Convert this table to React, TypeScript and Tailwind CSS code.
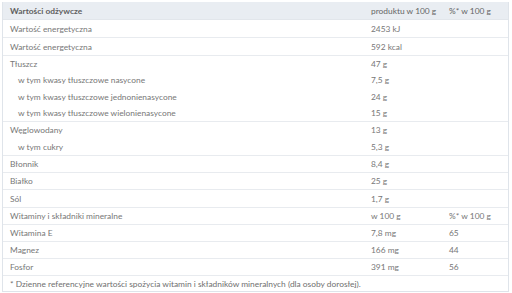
import React from 'react';

type Row = { label: string; value: string; pct?: string; sub?: boolean };

// heights exclude the 1px bottom border of each group
const groups: { rows: Row[]; h: string }[] = [
    { rows: [{ label: 'Wartość energetyczna', value: '2453 kJ' }], h: 'h-[17px]' },
    { rows: [{ label: 'Wartość energetyczna', value: '592 kcal' }], h: 'h-[17px]' },
    {
        rows: [
            { label: 'Tłuszcz', value: '47 g' },
            { label: 'w tym kwasy tłuszczowe nasycone', value: '7,5 g', sub: true },
            { label: 'w tym kwasy tłuszczowe jednonienasycone', value: '24 g', sub: true },
            { label: 'w tym kwasy tłuszczowe wielonienasycone', value: '15 g', sub: true },
        ],
        h: 'h-[16.25px]',
    },
    {
        rows: [
            { label: 'Węglowodany', value: '13 g' },
            { label: 'w tym cukry', value: '5,3 g', sub: true },
        ],
        h: 'h-[16.5px]',
    },
    { rows: [{ label: 'Błonnik', value: '8,4 g' }], h: 'h-[16px]' },
    { rows: [{ label: 'Białko', value: '25 g' }], h: 'h-[16px]' },
    { rows: [{ label: 'Sól', value: '1,7 g' }], h: 'h-[17px]' },
    { rows: [{ label: 'Witaminy i składniki mineralne', value: 'w 100 g', pct: '%* w 100 g' }], h: 'h-[16px]' },
    { rows: [{ label: 'Witamina E', value: '7,8 mg', pct: '65' }], h: 'h-[16px]' },
    { rows: [{ label: 'Magnez', value: '166 mg', pct: '44' }], h: 'h-[16px]' },
    { rows: [{ label: 'Fosfor', value: '391 mg', pct: '56' }], h: 'h-[16px]' },
];

export default function App() {
    return (
        <div className="w-[512px] h-[293px] bg-white pt-[2px] pl-[2px] font-['Lato','Liberation_Sans',sans-serif] text-[8.4px] leading-[12px] text-[#777]">
            <div className="w-[507px] border border-[#dfe4ea] border-t-0">
                <div className="grid grid-cols-[361px_78px_1fr] h-[18px] items-center bg-[#e9edf2] font-bold text-[#5f5f5f] border-b border-[#e2e6eb]">
                    <div className="pl-[7px]">Wartości odżywcze</div>
                    <div className="pl-[7px] font-normal text-[#666]">produktu w 100 g</div>
                    <div className="pl-[7px] font-normal text-[#666]">%* w 100 g</div>
                </div>
                {groups.map((g, i) => (
                    <div key={i} className="border-b border-[#e8ebef]">
                        {g.rows.map((r, j) => (
                            <div key={j} className={`grid grid-cols-[361px_78px_1fr] items-center ${g.h}`}>
                                <div className={r.sub ? 'pl-[15px]' : 'pl-[7px]'}>{r.label}</div>
                                <div className="pl-[7px]">{r.value}</div>
                                <div className="pl-[7px]">{r.pct ?? ''}</div>
                            </div>
                        ))}
                    </div>
                ))}
                <div className="h-[15px] flex items-center pl-[7px] text-[#6f6f6f]">
                    * Dzienne referencyjne wartości spożycia witamin i składników mineralnych (dla osoby dorosłej).
                </div>
            </div>
        </div>
    );
}
